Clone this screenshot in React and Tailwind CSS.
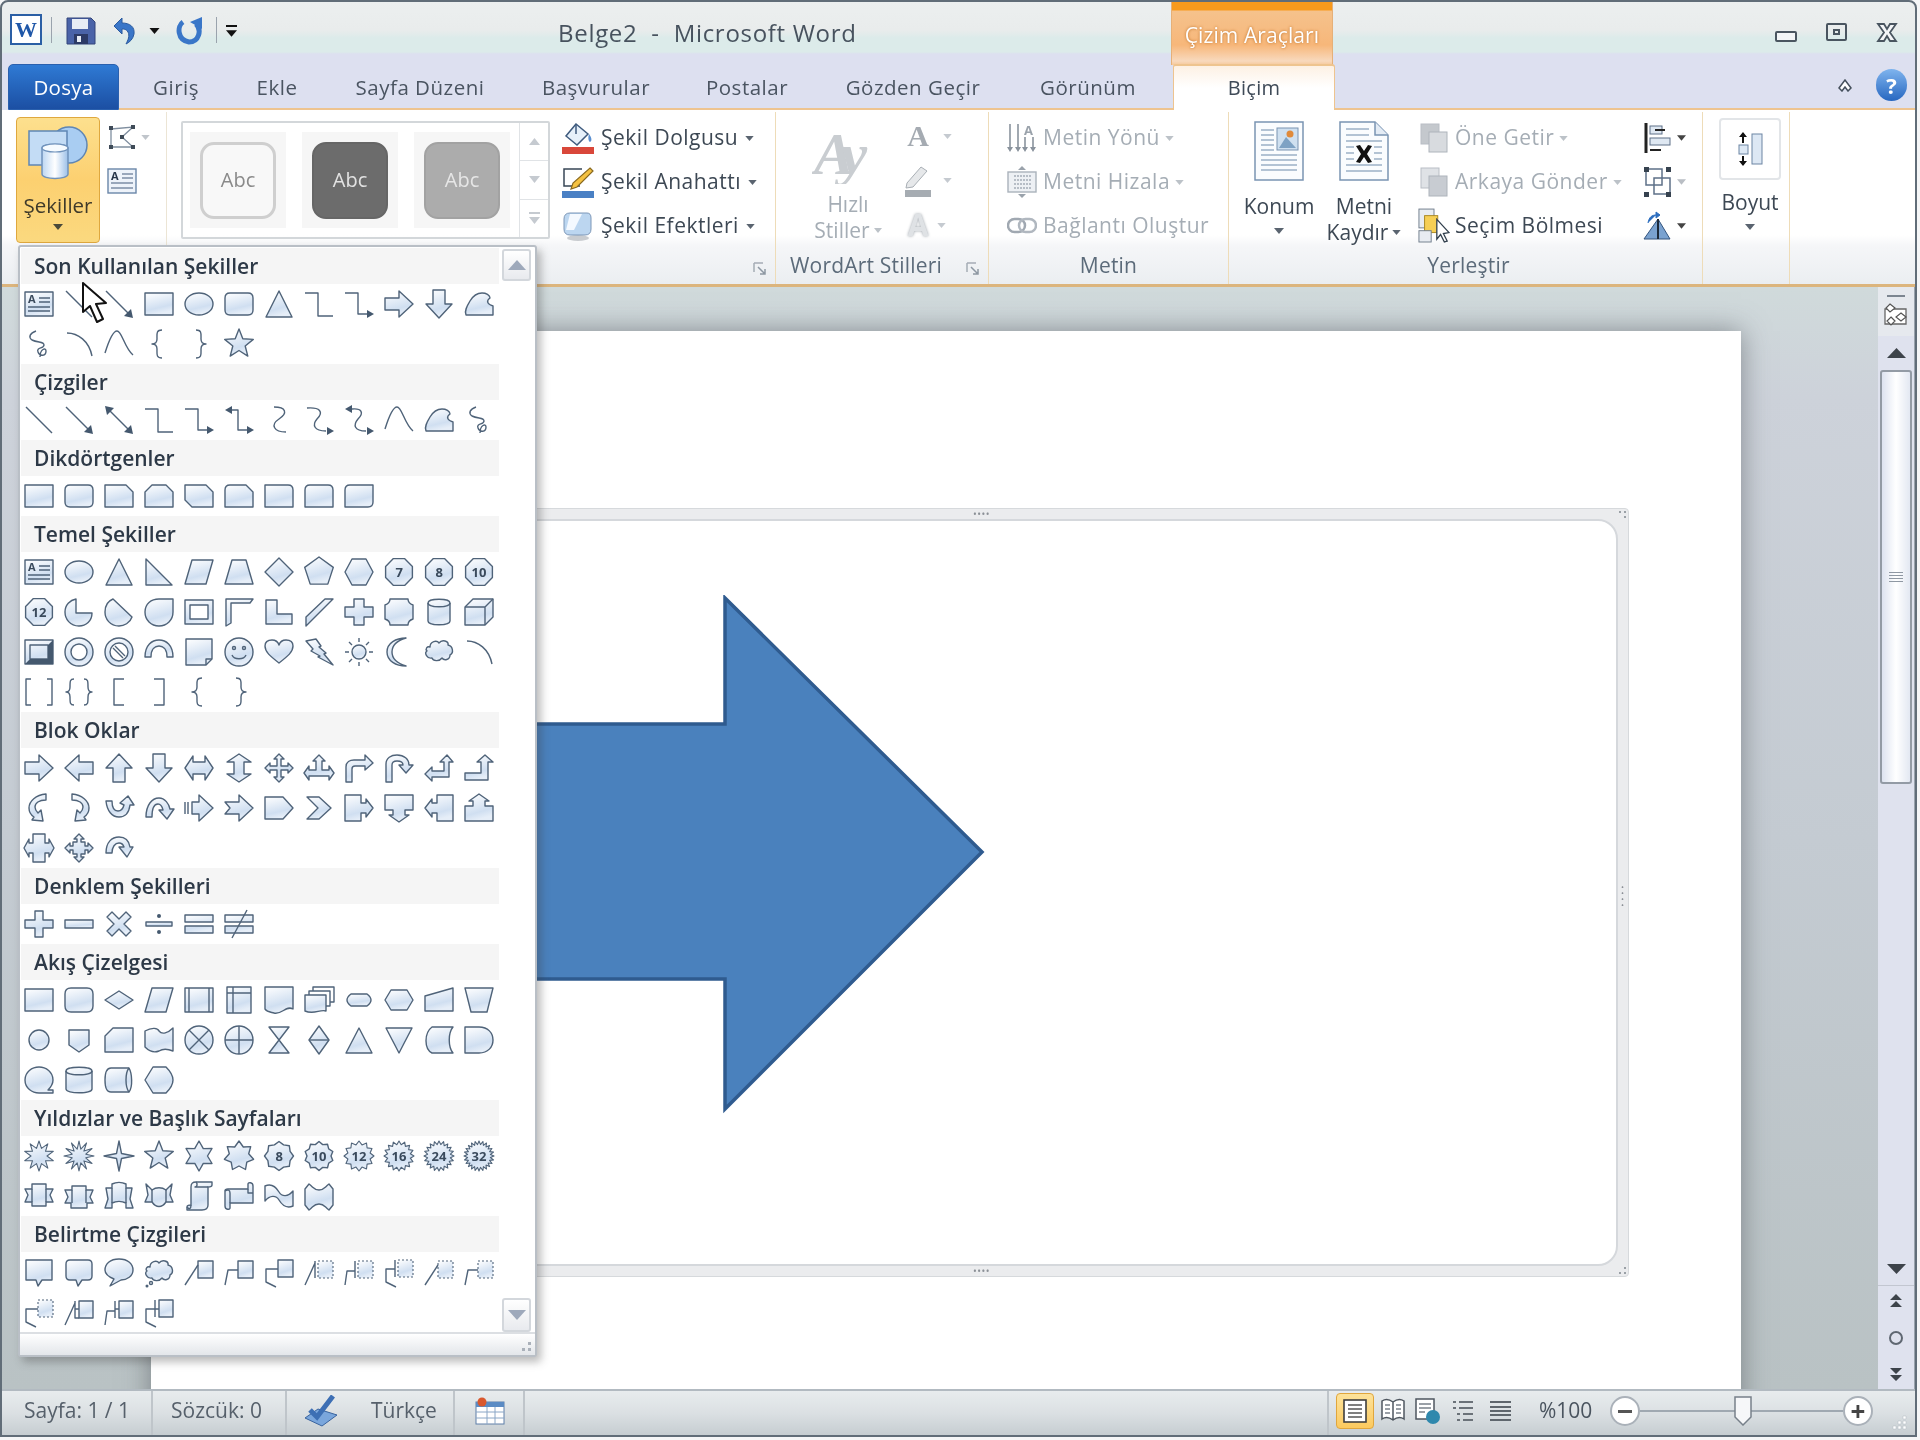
import React from 'react';

const circ = (cx, cy, r) => `M${cx - r} ${cy}a${r} ${r} 0 1 0 ${2 * r} 0a${r} ${r} 0 1 0 ${-2 * r} 0Z`;
const poly = (n, R, rot = 0, cx = 15, cy = 15) => {
    let d = '';
    for (let i = 0; i < n; i++) {
        const a = rot + (i * 2 * Math.PI) / n;
        d += `${i ? 'L' : 'M'}${(cx + R * Math.sin(a)).toFixed(1)} ${(cy - R * Math.cos(a)).toFixed(1)}`;
    }
    return d + 'Z';
};
const star = (n, R, r, cx = 15, cy = 15) => {
    let d = '';
    for (let i = 0; i < n * 2; i++) {
        const a = (i * Math.PI) / n;
        const q = i % 2 ? r : R;
        d += `${i ? 'L' : 'M'}${(cx + q * Math.sin(a)).toFixed(1)} ${(cy - q * Math.cos(a)).toFixed(1)}`;
    }
    return d + 'Z';
};

const RECT = 'M1 4H29V26H1Z';
const CLOUD = 'M6 10C6 4 13 3 15 6C18 2 25 4 24 8C29 9 30 16 26 18C26 23 20 24 18 21C15 25 9 24 8 21C3 22 0 16 3 14C1 12 3 9 6 10Z';
const FREE = 'M2 26C0 22 3 17 6 12C9 7 13 4 18 4C22 4 26 6 26 9C22 12 23 15 29 17V26Z';
const SCRIB = 'M12 2C6 4 4 8 8 11C14 14 20 12 20 16C20 20 12 18 14 23C16 28 22 27 22 22C22 18 16 20 16 28';

const S = {
    textbox: { s: 'M1 3H29V27H1Z', l: 'M15 9H26M15 13H26M4 18H26M4 22H26', t: 'A', tx: 4, ty: 14, ts: 11 },
    line: { l: 'M2 2L28 28' },
    arrow: { l: 'M2 2L26 26', k: 'M29 29L20 27L27 20Z' },
    dbl: { l: 'M5 5L25 25', k: 'M1 1L10 3L3 10ZM29 29L20 27L27 20Z' },
    elbow: { l: 'M1 4H14V27H29' },
    elbowA: { l: 'M1 4H14V25H24', k: 'M30 25L23 21V29Z' },
    elbowD: { l: 'M8 5H14V25H24', k: 'M1 5L8 1V9ZM30 25L23 21V29Z' },
    curveC: { l: 'M10 2C22 2 24 8 15 14C6 20 10 27 22 27' },
    curveA: { l: 'M3 3C16 2 20 7 13 14C8 20 10 26 22 26', k: 'M30 26L23 22V30Z' },
    curveD: { l: 'M8 4C18 3 20 8 14 14C9 20 10 26 22 26', k: 'M1 4L8 0V8ZM30 26L23 22V30Z' },
    curve: { l: 'M1 24C6 8 10 2 13 2C18 2 20 18 29 26' },
    arc: { l: 'M3 4C14 4 25 12 28 27' },
    free: { s: FREE },
    scribble: { l: SCRIB },
    lbrace: { l: 'M18 1C12 1 13 5 13 10C13 13 11 15 8 15C11 15 13 17 13 20C13 25 12 29 18 29' },
    rbrace: { l: 'M12 1C18 1 17 5 17 10C17 13 19 15 22 15C19 15 17 17 17 20C17 25 18 29 12 29' },
    rect: { s: RECT },
    oval: { s: 'M15 4C23 4 29 9 29 15S23 26 15 26S1 21 1 15S7 4 15 4Z' },
    round: { s: 'M6 4H24Q29 4 29 9V21Q29 26 24 26H6Q1 26 1 21V9Q1 4 6 4Z' },
    tri: { s: 'M15 2L28 28H2Z' },
    snip1: { s: 'M1 4H22L29 11V26H1Z' },
    snip2: { s: 'M8 4H22L29 11V26H1V11Z' },
    snipD: { s: 'M1 4H22L29 11V26H8L1 19Z' },
    snipR: { s: 'M6 4H22L29 11V26H1V9Q1 4 6 4Z' },
    round1: { s: 'M1 4H24Q29 4 29 9V26H1Z' },
    round2: { s: 'M6 4H24Q29 4 29 9V26H1V9Q1 4 6 4Z' },
    round2d: { s: 'M6 4H29V21Q29 26 24 26H1V9Q1 4 6 4Z' },
    rtTri: { s: 'M2 2L28 28H2Z' },
    para: { s: 'M8 3H29L22 27H1Z' },
    trap: { s: 'M8 3H22L29 27H1Z' },
    diamond: { s: 'M15 1L29 15L15 29L1 15Z' },
    penta: { s: poly(5, 15) },
    hexa: { s: 'M8 2H22L29 15L22 28H8L1 15Z' },
    n7: { s: poly(8, 14.5, 0.39), t: '7', tx: 11.5, ty: 20, ts: 13 },
    n8: { s: poly(8, 14.5, 0.39), t: '8', tx: 11.5, ty: 20, ts: 13 },
    n10: { s: poly(8, 14.5, 0.39), t: '10', tx: 7.5, ty: 20, ts: 13 },
    n12: { s: poly(8, 14.5, 0.39), t: '12', tx: 7.5, ty: 20, ts: 13 },
    pie: { s: 'M12 2V16H28C28 24 22 29 15 29C6 29 1 22 1 15C1 8 6 3 12 2Z' },
    chord: { s: 'M9 2L28 20C26 26 20 29 15 29C6 29 1 22 1 15C1 9 4 4 9 2Z' },
    tear: { s: 'M29 2V15C29 23 23 29 15 29C7 29 1 23 1 15C1 7 7 2 15 2Z' },
    frame: { s: 'M1 3H29V27H1ZM6 8V22H24V8Z' },
    halfFrame: { s: 'M2 29V2H29L26 6H7V26Z' },
    lShape: { s: 'M2 3H13V17H28V27H2Z' },
    stripe: { s: 'M2 29V20L21 2H29Z' },
    cross: { s: 'M10 2H20V10H29V20H20V28H10V20H1V10H10Z' },
    plaque: { s: 'M6 2H24C24 5 26 7 29 8V22C26 23 24 25 24 28H6C6 25 4 23 1 22V8C4 7 6 5 6 2Z' },
    can: { s: 'M4 6C4 1 26 1 26 6V24C26 29 4 29 4 24Z', l: 'M4 6C4 11 26 11 26 6' },
    cube: { s: 'M1 10L9 2H29V20L21 28H1Z', l: 'M1 10H21V28M21 10L29 2' },
    bevel: { s: 'M1 3H29V27H1Z', l: 'M6 8H24V22H6Z', k: 'M24 8L29 3V27L24 22ZM1 27L6 22H24L29 27Z' },
    donut: { s: `${circ(15, 15, 14)}${circ(15, 15, 8)}` },
    noSym: { s: `${circ(15, 15, 14)}${circ(15, 15, 9)}`, l: 'M9 11L19 21M11 9L21 19' },
    blockArc: { s: 'M1 20C1 8 8 3 15 3C22 3 29 8 29 20H23C23 12 19 9 15 9C11 9 7 12 7 20Z' },
    folded: { s: 'M2 2H28V22L22 28H2Z', l: 'M28 22H22V28' },
    smiley: { s: circ(15, 15, 14), l: `M8 18C10 23 20 23 22 18${circ(10, 11, 1.5)}${circ(20, 11, 1.5)}` },
    heart: { s: 'M15 26C6 19 1 15 1 9C1 5 4 3 8 3C11 3 14 5 15 8C16 5 19 3 22 3C26 3 29 5 29 9C29 15 24 19 15 26Z' },
    bolt: { s: 'M2 4L12 2L17 9L15 10L22 16L20 17L29 28L14 20L16 19L7 14L9 12Z' },
    sun: { s: circ(15, 15, 7), l: 'M15 1V5M15 25V29M1 15H5M25 15H29M5 5L8 8M22 22L25 25M25 5L22 8M8 22L5 25' },
    moon: { s: 'M22 1C12 4 8 9 8 15C8 21 12 26 22 29C12 29 3 24 3 15C3 6 12 1 22 1Z' },
    cloud: { s: CLOUD },
    dblBracket: { l: 'M7 2H2V28H7M23 2H28V28H23' },
    dblBrace: { l: 'M10 2C6 2 6 4 6 10C6 13 5 15 2 15C5 15 6 17 6 20C6 26 6 28 10 28M20 2C24 2 24 4 24 10C24 13 25 15 28 15C25 15 24 17 24 20C24 26 24 28 20 28' },
    lbracket: { l: 'M20 2H10V28H20' },
    rbracket: { l: 'M10 2H20V28H10' },
    rA: { s: 'M1 9H15V2L29 15L15 28V21H1Z' },
    lA: { s: 'M29 9H15V2L1 15L15 28V21H29Z' },
    uA: { s: 'M9 29V15H2L15 1L28 15H21V29Z' },
    dA: { s: 'M9 1V15H2L15 29L28 15H21V1Z' },
    lrA: { s: 'M1 15L9 3V9H21V3L29 15L21 27V21H9V27Z' },
    udA: { s: 'M15 1L27 9H20V21H27L15 29L3 21H10V9H3Z' },
    quadA: { s: 'M15 1L20 6H17V13H24V10L29 15L24 20V17H17V24H20L15 29L10 24H13V17H6V20L1 15L6 10V13H13V6H10Z' },
    lrUp: { s: 'M15 2L21 8H18V17H25V13L30 20L25 27V23H5V27L0 20L5 13V17H12V8H9Z' },
    bent: { s: 'M2 29V14C2 9 6 7 10 7H21V2L29 10L21 17V13H11C9 13 8 14 8 16V29Z' },
    uturn: { s: 'M2 29V11C2 5 7 2 13 2C20 2 25 6 25 12H29L22 20L15 12H19C19 9 16 8 13 8C10 8 8 9 8 12V29Z' },
    leftUp: { s: 'M1 21L8 14V18H20V9H16L23 2L29 9H25V24H8V28Z' },
    bentUp: { s: 'M1 20H17V9H13L21 2L29 9H24V27H1Z' },
    curvedR: { s: 'M22 1C12 2 5 8 5 15C5 19 7 22 10 24L8 27L19 28L17 17L14 20C12 18 11 16 11 14C11 10 15 7 22 7Z' },
    curvedL: { s: 'M8 1C18 2 25 8 25 15C25 19 23 22 20 24L22 27L11 28L13 17L16 20C18 18 19 16 19 14C19 10 15 7 8 7Z' },
    curvedU: { s: 'M2 8C3 18 8 24 15 24C21 24 25 20 26 12L30 12L24 3L16 10L20 12C19 16 17 18 14 18C10 18 8 14 8 8Z' },
    curvedD: { s: 'M2 24C2 12 8 5 15 5C21 5 25 11 26 16H30L23 26L15 17H19C18 13 17 11 14 11C10 11 8 16 8 24Z' },
    striped: { s: 'M8 9H15V2L29 15L15 28V21H8Z', l: 'M1 9V21M4 9V21' },
    notched: { s: 'M1 9H15V2L29 15L15 28V21H1L6 15Z' },
    pentA: { s: 'M1 4H19L29 15L19 26H1Z' },
    chevron: { s: 'M3 4H15L27 15L15 26H3L14 15Z' },
    rCall: { s: 'M1 2H17V10H22V6L29 15L22 24V20H17V28H1Z' },
    dCall: { s: 'M1 2H29V17H21V22H25L15 29L5 22H9V17H1Z' },
    lCall: { s: 'M29 2H13V10H8V6L1 15L8 24V20H13V28H29Z' },
    uCall: { s: 'M1 28H29V13H21V8H25L15 1L5 8H9V13H1Z' },
    lrCall: { s: 'M9 1H21V10H25V6L30 15L25 24V20H21V29H9V20H5V24L0 15L5 6V10H9Z' },
    quadCall: { s: 'M15 1L20 6H17V9H21V13H24V10L29 15L24 20V17H21V21H17V24H20L15 29L10 24H13V21H9V17H6V20L1 15L6 10V13H9V9H13V6H10Z' },
    circA: { s: 'M2 20C2 9 8 4 15 4C21 4 25 8 26 14H29L23 24L15 14H20C19 11 17 10 15 10C11 10 8 14 8 20Z' },
    plus: { s: 'M11 2H19V11H29V19H19V28H11V19H1V11H11Z' },
    minus: { s: 'M1 11H29V19H1Z' },
    mult: { s: 'M8 3L15 10L22 3L27 8L20 15L27 22L22 27L15 20L8 27L3 22L10 15L3 8Z' },
    div: { s: 'M2 13H28V17H2Z', k: `${circ(15, 7, 2)}${circ(15, 23, 2)}` },
    equal: { s: 'M1 6H29V13H1ZM1 17H29V24H1Z' },
    neq: { s: 'M1 6H29V13H1ZM1 17H29V24H1Z', l: 'M8 29L23 1' },
    alt: { s: 'M7 3H23Q29 3 29 9V21Q29 27 23 27H7Q1 27 1 21V9Q1 3 7 3Z' },
    decision: { s: 'M15 6L29 15L15 24L1 15Z' },
    predef: { s: 'M1 3H29V27H1Z', l: 'M5 3V27M25 3V27' },
    internal: { s: 'M3 2H27V28H3Z', l: 'M3 8H27M9 2V28' },
    doc: { s: 'M1 2H29V24C22 20 18 30 10 28C6 27 3 27 1 24Z' },
    multidoc: { s: 'M1 10H22V26C16 24 10 30 1 26Z', l: 'M5 10V6H26V21H22M9 6V2H30V17H26' },
    term: { s: 'M7 9H23Q31 15 23 21H7Q-1 15 7 9Z' },
    prep: { s: 'M7 5H23L29 15L23 25H7L1 15Z' },
    manualIn: { s: 'M1 11L29 3V26H1Z' },
    manualOp: { s: 'M1 3H29L23 27H7Z' },
    conn: { s: circ(15, 15, 10) },
    offpage: { s: 'M5 5H25V20L15 27L5 20Z' },
    card: { s: 'M9 3H29V27H1V11Z' },
    tape: { s: 'M1 6C8 2 14 3 15 6C18 10 24 8 29 3V26C22 23 18 24 15 26C10 28 6 27 1 22Z' },
    sum: { s: circ(15, 15, 14), l: 'M5 5L25 25M25 5L5 25' },
    or: { s: circ(15, 15, 14), l: 'M15 1V29M1 15H29' },
    collate: { s: 'M5 2H25L5 28H25Z' },
    sort: { s: 'M15 1L25 15L15 29L5 15Z', l: 'M5 15H25' },
    extract: { s: 'M15 3L28 28H2Z' },
    merge: { s: 'M2 3H28L15 28Z' },
    stored: { s: 'M8 2H29C24 8 24 22 29 28H8C0 24 0 8 8 2Z' },
    delay: { s: 'M1 2H15C24 2 29 8 29 15C29 22 24 28 15 28H1Z' },
    seq: { s: 'M15 2C8 2 1 7 1 15C1 23 8 28 15 28H29V25H24C27 22 29 19 29 15C29 7 22 2 15 2Z' },
    mag: { s: 'M2 6C2 1 28 1 28 6V24C28 29 2 29 2 24Z', l: 'M2 6C2 11 28 11 28 6' },
    direct: { s: 'M7 3H25C28 8 29 22 25 27H7C2 27 1 22 1 15C1 8 2 3 7 3Z', l: 'M25 3C21 8 21 22 25 27' },
    display: { s: 'M9 2H22C26 6 29 10 29 15C29 20 26 24 22 28H9L1 15Z' },
    expl1: { s: star(10, 15, 8), w: 1.1 },
    expl2: { s: star(12, 15, 7), w: 1.1 },
    star4: { s: star(4, 15, 3.5) },
    star5: { s: star(5, 15, 6.5) },
    star6: { s: star(6, 15, 8.5) },
    star7: { s: star(7, 15, 10) },
    s8: { s: star(8, 14.5, 12), t: '8', tx: 11.5, ty: 20, ts: 13 },
    s10: { s: star(10, 14.5, 12), t: '10', tx: 7.5, ty: 20, ts: 13 },
    s12: { s: star(12, 15, 11.5), t: '12', tx: 7.5, ty: 20, ts: 13, w: 1.1 },
    s16: { s: star(16, 15, 11.5), t: '16', tx: 7.5, ty: 20, ts: 13, w: 1.1 },
    s24: { s: star(20, 15, 11.5), t: '24', tx: 7.5, ty: 20, ts: 13, w: 1.1 },
    s32: { s: star(24, 15, 11.5), t: '32', tx: 7.5, ty: 20, ts: 13, w: 1.1 },
    ribbonUp: { s: 'M8 3H22V8H29L26 14L29 21H22V25H8V21H1L4 14L1 8H8Z', l: 'M8 8V21M22 8V21' },
    ribbonDown: { s: 'M8 5H22V9H29L26 16L29 22H23V27H7V22H1L4 16L1 9H8Z', l: 'M8 9V22M22 9V22' },
    curveRibU: { s: 'M8 3C12 1 18 1 22 3V7H28L26 18L29 27H22V22C18 20 12 20 8 22V27H1L4 18L2 7H8Z', l: 'M8 7V22M22 7V22' },
    curveRibD: { s: 'M2 3L8 9C12 6 18 6 22 9L28 3L26 14L29 21H22C18 27 12 27 8 21H1L4 14Z', l: 'M8 9V21M22 9V21' },
    vscroll: { s: 'M7 6C7 2 9 1 12 1H28V4C28 6 26 6 24 6V24C24 28 21 29 18 29H3V26C3 24 5 24 7 24Z', l: 'M12 1C14 3 13 6 11 6H24M3 26C5 29 7 28 7 24' },
    hscroll: { s: 'M4 8H24V3C24 1 29 1 29 5V22H6V27C6 29 1 29 1 25V10C1 8 2 8 4 8Z', l: 'M24 8V12H29M6 22V12C6 9 4 8 1 10' },
    wave: { s: 'M1 5C8 2 12 6 15 11C18 16 24 16 29 10V25C22 28 18 24 15 19C12 14 6 14 1 20Z' },
    dblWave: { s: 'M1 8L5 3C10 7 10 9 15 9C20 9 20 7 25 3L29 8V24L25 29C20 25 20 23 15 23C10 23 10 25 5 29L1 24Z' },
    rectC: { s: 'M2 3H28V23H18L14 29L12 23H2Z' },
    roundC: { s: 'M6 3H24Q28 3 28 7V19Q28 23 24 23H18L14 29L12 23H6Q2 23 2 19V7Q2 3 6 3Z' },
    ovalC: { s: 'M15 2C24 2 29 7 29 13C29 19 23 23 17 23L6 29L10 22C5 20 1 17 1 13C1 7 6 2 15 2Z' },
    cloudC: { s: CLOUD, l: `${circ(7, 26, 1.5)}${circ(3, 29, 0.8)}` },
    line1: { s: 'M14 4H29V21H14Z', l: 'M1 28L14 8' },
    line2: { s: 'M14 4H29V21H14Z', l: 'M1 28L4 13H14' },
    line3: { s: 'M14 3H29V20H14Z', l: 'M14 12H2V25L12 30' },
    acc1: { s: 'M14 4H29V21H14Z', dash: true, l: 'M1 28L11 6M11 4V21' },
    acc2: { s: 'M14 4H29V21H14Z', dash: true, l: 'M1 28L3 14H11M11 4V21' },
    acc3: { s: 'M14 3H29V20H14Z', dash: true, l: 'M11 12H2V25L12 30M11 3V20' },
    none1: { s: 'M14 4H29V21H14Z', dash: true, l: 'M1 28L14 8' },
    none2: { s: 'M14 4H29V21H14Z', dash: true, l: 'M1 28L4 13H14' },
    none3: { s: 'M14 3H29V20H14Z', dash: true, l: 'M14 12H2V25L12 30' },
    border1: { s: 'M15 4H29V21H15Z', l: 'M1 28L11 6M11 4V21H15M11 12H15' },
    border2: { s: 'M15 4H29V21H15Z', l: 'M1 28L3 14H11M11 4V21M11 12H15' },
    border3: { s: 'M15 3H29V20H15Z', l: 'M11 12H2V25L12 30M11 3V20M11 12H15' },
};

const SECTIONS = [
    { title: 'Son Kullanılan Şekiller', items: ['textbox', 'line', 'arrow', 'rect', 'oval', 'round', 'tri', 'elbow', 'elbowA', 'rA', 'dA', 'free', 'scribble', 'arc', 'curve', 'lbrace', 'rbrace', 'star5'] },
    { title: 'Çizgiler', items: ['line', 'arrow', 'dbl', 'elbow', 'elbowA', 'elbowD', 'curveC', 'curveA', 'curveD', 'curve', 'free', 'scribble'] },
    { title: 'Dikdörtgenler', items: ['rect', 'round', 'snip1', 'snip2', 'snipD', 'snipR', 'round1', 'round2', 'round2d'] },
    { title: 'Temel Şekiller', items: ['textbox', 'oval', 'tri', 'rtTri', 'para', 'trap', 'diamond', 'penta', 'hexa', 'n7', 'n8', 'n10', 'n12', 'pie', 'chord', 'tear', 'frame', 'halfFrame', 'lShape', 'stripe', 'cross', 'plaque', 'can', 'cube', 'bevel', 'donut', 'noSym', 'blockArc', 'folded', 'smiley', 'heart', 'bolt', 'sun', 'moon', 'cloud', 'arc', 'dblBracket', 'dblBrace', 'lbracket', 'rbracket', 'lbrace', 'rbrace'] },
    { title: 'Blok Oklar', items: ['rA', 'lA', 'uA', 'dA', 'lrA', 'udA', 'quadA', 'lrUp', 'bent', 'uturn', 'leftUp', 'bentUp', 'curvedR', 'curvedL', 'curvedU', 'curvedD', 'striped', 'notched', 'pentA', 'chevron', 'rCall', 'dCall', 'lCall', 'uCall', 'lrCall', 'quadCall', 'circA'] },
    { title: 'Denklem Şekilleri', items: ['plus', 'minus', 'mult', 'div', 'equal', 'neq'] },
    { title: 'Akış Çizelgesi', items: ['rect', 'alt', 'decision', 'para', 'predef', 'internal', 'doc', 'multidoc', 'term', 'prep', 'manualIn', 'manualOp', 'conn', 'offpage', 'card', 'tape', 'sum', 'or', 'collate', 'sort', 'extract', 'merge', 'stored', 'delay', 'seq', 'mag', 'direct', 'display'] },
    { title: 'Yıldızlar ve Başlık Sayfaları', items: ['expl1', 'expl2', 'star4', 'star5', 'star6', 'star7', 's8', 's10', 's12', 's16', 's24', 's32', 'ribbonUp', 'ribbonDown', 'curveRibU', 'curveRibD', 'vscroll', 'hscroll', 'wave', 'dblWave'] },
    { title: 'Belirtme Çizgileri', items: ['rectC', 'roundC', 'ovalC', 'cloudC', 'line1', 'line2', 'line3', 'acc1', 'acc2', 'acc3', 'none1', 'none2', 'none3', 'border1', 'border2', 'border3'] },
];

const TABS = [
    { label: 'Giriş', cls: 'w-[114px]' },
    { label: 'Ekle', cls: 'w-[88px]' },
    { label: 'Sayfa Düzeni', cls: 'w-[198px]' },
    { label: 'Başvurular', cls: 'w-[154px]' },
    { label: 'Postalar', cls: 'w-[148px]' },
    { label: 'Gözden Geçir', cls: 'w-[184px]' },
    { label: 'Görünüm', cls: 'w-[166px]' },
];

const Shape = ({ name }) => {
    const s = S[name];
    const w = s.w || 1.4;
    return (
        <svg width="30" height="30" viewBox="0 0 30 30" className="overflow-visible">
            <g stroke="#4f6379" strokeWidth="1.4" strokeLinejoin="round" fill="none">
                {s.s && <path d={s.s} fill="url(#shapeFill)" fillRule="evenodd" strokeDasharray={s.dash ? '2 2' : undefined} strokeWidth={s.dash ? 1.1 : w} />}
                {s.l && <path d={s.l} />}
                {s.k && <path d={s.k} fill="#44586e" stroke="none" />}
            </g>
            {s.t && <text x={s.tx} y={s.ty} fontSize={s.ts} fontWeight="700" fill="#3a4a5c">{s.t}</text>}
        </svg>
    );
};

const Caret = ({ color = '#5a6470', w = 10, h = 6 }) => (
    <svg width={w} height={h} viewBox="0 0 10 6" className="shrink-0"><path d="M0 0H10L5 6Z" fill={color} /></svg>
);

const Launcher = () => (
    <svg width="14" height="14" viewBox="0 0 14 14" className="absolute right-[8px] bottom-[8px]">
        <path d="M1 1H10M1 1V10" stroke="#a5acb5" fill="none" strokeWidth="1.5" />
        <path d="M5 5L12 12M12 7V12H7" stroke="#8e98a3" fill="none" strokeWidth="1.5" />
    </svg>
);

const GroupLabel = ({ children }) => (
    <div className="h-[36px] flex items-center justify-center text-[21px] text-[#5c6b7a] tracking-[0.2px] whitespace-nowrap">{children}</div>
);

const Cmd = ({ icon, label, muted, caret = true, gap = 'gap-[7px]' }) => (
    <div className={`h-[44.5px] flex items-center ${gap}`}>
        <div className="w-[32px] h-[32px] flex items-center justify-center shrink-0">{icon}</div>
        <span className={`text-[21px] tracking-[0.5px] whitespace-nowrap ${muted ? 'text-[#a5adb5]' : 'text-[#3d4854]'}`}>{label}</span>
        {caret && <Caret color={muted ? '#bcc2c8' : '#5a6470'} w={9} h={5} />}
    </div>
);

const Swatch = ({ outer, box, text }) => (
    <div className={`w-[96px] h-[96px] flex items-center justify-center ${outer}`}>
        <div className={`w-[76px] h-[77px] rounded-[14px] flex items-center justify-center text-[20px] ${box} ${text}`}>Abc</div>
    </div>
);

// ribbon drawings
const ShapesIcon = () => (
    <svg width="60" height="58" viewBox="0 0 60 58">
        <defs>
            <linearGradient id="cyl" x1="0" y1="0" x2="1" y2="0">
                <stop offset="0" stopColor="#bcd6f2" /><stop offset="0.5" stopColor="#ffffff" /><stop offset="1" stopColor="#9cc0e8" />
            </linearGradient>
        </defs>
        <circle cx="41" cy="21" r="18" fill="#a9cdf2" stroke="#5f86b4" strokeWidth="1.5" />
        <rect x="1" y="7" width="38" height="34" fill="#c3dcf5" stroke="#5f86b4" strokeWidth="1.5" />
        <path d="M14 24C14 19 40 19 40 24V50C40 56 14 56 14 50Z" fill="url(#cyl)" stroke="#6f92bb" strokeWidth="1.5" />
        <ellipse cx="27" cy="24" rx="13" ry="4" fill="#f6fbff" stroke="#6f92bb" strokeWidth="1.2" />
    </svg>
);

const EditPoints = () => (
    <svg width="30" height="28" viewBox="0 0 30 28">
        <path d="M4 6L26 4L15 14L26 24L4 24Z" fill="none" stroke="#7f8e9f" strokeWidth="1.3" />
        {[[2, 3], [24, 2], [13, 12], [24, 22], [2, 22]].map(([x, y]) => (
            <rect key={x + '-' + y} x={x} y={y} width="4" height="4" fill="#3f4b58" />
        ))}
    </svg>
);

const TextBoxIcon = () => (
    <svg width="30" height="26" viewBox="0 0 30 26">
        <rect x="1" y="1" width="28" height="24" fill="#eef3fa" stroke="#6a86a8" strokeWidth="1.4" />
        <path d="M15 6H26M15 10H26M4 15H26M4 20H26" stroke="#7d8fa6" strokeWidth="1.5" />
        <text x="4" y="12" fontSize="11" fontWeight="700" fill="#27364a">A</text>
    </svg>
);

const Bucket = () => (
    <svg width="32" height="32" viewBox="0 0 32 32">
        <path d="M14 2L4 14L15 23L26 12Z" fill="#e6f0fa" stroke="#3f5b7e" strokeWidth="1.5" />
        <path d="M14 2V12" stroke="#3f5b7e" strokeWidth="1.5" />
        <path d="M27 12C30 16 30 19 28 20C26 19 26 15 27 12Z" fill="#5a8fd0" />
        <rect x="0" y="25" width="32" height="7" fill="#d9473a" />
    </svg>
);

const Pen = () => (
    <svg width="32" height="32" viewBox="0 0 32 32">
        <path d="M20 3H2V20H18" fill="#fff" stroke="#374656" strokeWidth="1.5" />
        <path d="M28 2L31 5L15 21L9 23L11 17Z" fill="#f5c242" stroke="#8a6a20" strokeWidth="1.2" />
        <rect x="0" y="25" width="32" height="7" fill="#4a80c4" />
    </svg>
);

const Effects = () => (
    <svg width="32" height="32" viewBox="0 0 32 32">
        <ellipse cx="16" cy="28" rx="11" ry="3" fill="#c9ccd0" />
        <path d="M8 3H25Q29 3 29 8V19Q29 25 23 25H8Q2 25 2 19V9Q2 3 8 3Z" fill="#bcd6f0" stroke="#7d97b8" strokeWidth="1" />
        <path d="M8 4H20L12 20H4Z" fill="#f4f9ff" />
    </svg>
);

const Doc = ({ children }) => (
    <svg width="50" height="60" viewBox="0 0 50 60">
        <path d="M1 1H49V59H1Z" fill="#fafcfe" stroke="#7a94b2" strokeWidth="1.5" />
        {children}
    </svg>
);

const MetinYonu = () => (
    <svg width="30" height="30" viewBox="0 0 30 30">
        <path d="M3 1V25M11 1V25M18 14V25M26 14V25" stroke="#8a939d" strokeWidth="1.6" />
        <path d="M0 24L3 29L6 24ZM8 24L11 29L14 24ZM15 24L18 29L21 24ZM23 24L26 29L29 24Z" fill="#8a939d" />
        <text x="17" y="12" fontSize="13" fontWeight="700" fill="#9aa2ab">A</text>
    </svg>
);

const MetinHizala = () => (
    <svg width="30" height="32" viewBox="0 0 30 32">
        <rect x="1" y="6" width="28" height="20" fill="#edf0f4" stroke="#aab2bb" strokeWidth="1.4" />
        <path d="M7 10H24M7 14H24M7 18H24M7 22H24" stroke="#a4acb6" strokeWidth="1.4" strokeDasharray="2 1" />
        <path d="M15 0L19 4H11ZM15 32L19 28H11Z" fill="#9aa2ab" />
    </svg>
);

const LinkIcon = () => (
    <svg width="30" height="18" viewBox="0 0 30 18">
        <rect x="1" y="2" width="17" height="13" rx="6.5" fill="none" stroke="#a0a8b1" strokeWidth="2.5" />
        <rect x="12" y="2" width="17" height="13" rx="6.5" fill="none" stroke="#b0b7bf" strokeWidth="2.5" />
    </svg>
);

const TwoSheets = ({ front = '#c8ccd2', back = '#dfe2e6' }) => (
    <svg width="30" height="32" viewBox="0 0 30 32">
        <rect x="2" y="2" width="18" height="20" fill={back} stroke="#b9bec5" />
        <rect x="10" y="10" width="18" height="20" fill={front} stroke="#aeb4bb" />
    </svg>
);

const SelectionPane = () => (
    <svg width="34" height="38" viewBox="0 0 34 38">
        <rect x="1" y="1" width="16" height="20" fill="#e8ecf1" stroke="#6f7c8b" />
        <rect x="7" y="8" width="14" height="18" fill="#f6cf55" stroke="#a8861f" />
        <rect x="1" y="24" width="13" height="12" fill="#e8ecf1" stroke="#6f7c8b" />
        <path d="M20 12V33L24 28L28 36L31 35L27 27L33 26Z" fill="#fff" stroke="#33414f" strokeWidth="1.4" />
    </svg>
);

const Cursor = () => (
    <svg width="26" height="42" viewBox="0 0 26 42" className="absolute left-[82px] top-[282px] z-30">
        <path d="M1 1V30L8 24L15 40L21 37L14 22L24 21Z" fill="#fff" stroke="#111" strokeWidth="2" strokeLinejoin="round" />
    </svg>
);

const ShapesMenu = () => (
    <div className="absolute left-[18px] top-[245px] w-[519px] h-[1112px] z-20 bg-white border-2 border-[#b9bfc6] rounded-[3px] shadow-[4px_5px_8px_rgba(60,60,60,0.35)] flex flex-col">
        <div className="flex flex-1 min-h-0">
            <div className="w-[479px] pl-px pt-px">
                {SECTIONS.map(sec => (
                    <div key={sec.title}>
                        <div className="h-[36px] bg-[#f5f5f5] flex items-center pl-[13px] pt-[2px] text-[21px] font-semibold text-[#2d3947]">{sec.title}</div>
                        <div className="grid grid-cols-[repeat(12,30px)] gap-x-[10px] auto-rows-[40px] items-center pl-[3px]">
                            {sec.items.map((it, i) => <Shape key={it + i} name={it} />)}
                        </div>
                    </div>
                ))}
            </div>
            <div className="flex-1 flex flex-col justify-between pl-[3px] pr-[3px] pt-[2px]">
                <div className="h-[32px] w-[29px] border-2 border-[#d3d7dc] rounded-[3px] bg-gradient-to-b from-white to-[#e8eaee] flex items-center justify-center">
                    <svg width="18" height="10" viewBox="0 0 18 10"><path d="M9 0L18 10H0Z" fill="#9ea9bb" /></svg>
                </div>
                <div className="h-[34px] w-[29px] border-2 border-[#d3d7dc] rounded-[3px] bg-gradient-to-b from-white to-[#e8eaee] flex items-center justify-center">
                    <svg width="18" height="10" viewBox="0 0 18 10"><path d="M9 10L18 0H0Z" fill="#9ea9bb" /></svg>
                </div>
            </div>
        </div>
        <div className="relative h-[23px] border-t-2 border-[#dcdfe3] bg-gradient-to-b from-white to-[#e3e6ea]">
            <svg width="14" height="14" viewBox="0 0 14 14" className="absolute right-[2px] bottom-[1px]">
                <path d="M9 2h3v3H9zM3 8h3v3H3zM9 8h3v3H9z" fill="#aab1ba" />
            </svg>
        </div>
    </div>
);

const TitleBar = () => (
    <div className="h-[62px] flex shrink-0">
        <div className="w-[1169px] flex items-start pt-[12px] pl-[8px]">
            <div className="w-[32px] h-[31px] border-2 border-[#2b5fa5] bg-white flex items-center justify-center text-[22px] font-bold text-[#1f57a8] leading-none font-['Liberation_Serif',serif]">W</div>
            <div className="w-px h-[26px] bg-[#9aa3ad] ml-[9px] mt-[3px]" />
            <svg width="30" height="28" viewBox="0 0 30 28" className="ml-[14px] mt-[3px]">
                <path d="M1 1H25L29 5V27H1Z" fill="#4a63a8" stroke="#33457a" />
                <rect x="6" y="2" width="16" height="10" fill="#e8edf5" />
                <rect x="8" y="17" width="14" height="10" fill="#2c3a66" />
                <rect x="11" y="19" width="4" height="6" fill="#e8edf5" />
            </svg>
            <svg width="24" height="30" viewBox="0 0 24 30" className="ml-[16px] mt-[2px]">
                <path d="M2 10L10 2V7C18 7 23 11 22 18C21 23 18 26 14 28C16 24 18 20 16 16C14 13 12 13 10 13V18Z" fill="#3a76c8" stroke="#2b5a9e" strokeWidth="1" />
            </svg>
            <div className="ml-[13px] mt-[14px]"><Caret color="#111" w={11} h={6} /></div>
            <svg width="28" height="30" viewBox="0 0 28 30" className="ml-[15px] mt-[2px]">
                <path d="M8 6C2 10 2 24 14 26C24 26 27 14 21 8" fill="none" stroke="#3a76c8" strokeWidth="5" />
                <path d="M27 1V13L15 6Z" fill="#3a76c8" />
            </svg>
            <div className="w-px h-[26px] bg-[#9aa3ad] ml-[13px] mt-[3px]" />
            <div className="ml-[9px] mt-[11px] flex flex-col items-center gap-[3px]">
                <div className="w-[11px] h-[2px] bg-[#111]" />
                <Caret color="#111" w={11} h={7} />
            </div>
            <div className="ml-[321px] text-[24px] leading-[40px] -mt-[1px] text-[#47525e] tracking-[0.7px] whitespace-pre">Belge2  -  Microsoft Word</div>
        </div>
        <div className="w-[162px] h-[64px] -mt-px bg-[linear-gradient(to_bottom,#f89a1c_0,#f89a1c_9px,#f5c28c_10px,#f7b77a_44px,#f8d9bd_60px,#f6c89a_64px)] border-x border-[#e6b078] flex items-center justify-center pt-[5px]">
            <span className="text-[21px] text-white tracking-[0.1px] whitespace-nowrap [text-shadow:0_0_3px_#b86a20]">Çizim Araçları</span>
        </div>
        <div className="flex-1 flex items-start justify-end gap-[29px] pr-[17px] pt-[21px] text-[#444]">
            <div className="w-[22px] h-[11px] mt-[8px] border-2 border-[#4a5560] rounded-[2px] bg-[#f2f4f6]" />
            <div className="w-[21px] h-[18px] border-2 border-[#4a5560] rounded-[2px] flex items-center justify-center"><div className="w-[7px] h-[6px] border-2 border-[#4a5560]" /></div>
            <svg width="22" height="19" viewBox="0 0 22 19"><path d="M2 1H8L11 6L14 1H20L14 9.5L20 18H14L11 13L8 18H2L8 9.5Z" fill="#f4f5f7" stroke="#4a5560" strokeWidth="1.8" /></svg>
        </div>
    </div>
);

const TabRow = () => (
    <div className="h-[46px] flex shrink-0 relative z-10">
        <div className="w-[6px]" />
        <div className="w-[111px] h-[46px] rounded-t-[5px] bg-gradient-to-b from-[#2f7ad4] to-[#1c4fa3] border border-[#2a60ae] flex items-center justify-center text-[20.5px] text-white tracking-[0.3px]">Dosya</div>
        <div className="flex border-b-2 border-[#eec48f] h-[46px]">
            {TABS.map(t => (
                <div key={t.label} className={`${t.cls} flex items-center justify-center pt-[2px] text-[20.5px] text-[#4a5461] tracking-[0.5px] whitespace-nowrap`}>{t.label}</div>
            ))}
        </div>
        <div className="w-[2px] border-b-2 border-[#eec48f]" />
        <div className="w-[162px] h-[46px] rounded-t-[3px] border-x border-t-2 border-[#eec48f] bg-gradient-to-b from-[#fdf1e4] via-white to-white flex items-center justify-center text-[20px] text-[#3f4a57] tracking-[0.3px]">Biçim</div>
        <div className="flex-1 flex items-center justify-end gap-[24px] pr-[8px] border-b-2 border-[#eec48f] pb-[2px]">
            <svg width="14" height="14" viewBox="0 0 14 14"><path d="M1 10L7 2L13 10L10 13L7 9L4 13Z" fill="#fff" stroke="#45505c" strokeWidth="1.5" /></svg>
            <div className="w-[31px] h-[32px] rounded-full bg-gradient-to-b from-[#7fb4ee] to-[#2667c0] text-white text-[22px] font-bold flex items-center justify-center">?</div>
        </div>
    </div>
);

const Ribbon = () => (
    <div className="h-[177px] shrink-0 flex pt-[2px] border-b-[3px] border-b-[#dcb57d] bg-[linear-gradient(to_bottom,#fff_0,#fff_72%,#f5f6f8_78%,#ebeef1_100%)]">
        {/* Insert shapes */}
        <div className="w-[165px] flex flex-col border-r border-[#ece5d5]">
            <div className="h-[136px] flex pl-[14px] pt-[5px]">
                <div className="w-[84px] h-[126px] rounded-[4px] border border-[#dfa83e] bg-gradient-to-b from-[#fde08e] via-[#fcd070] to-[#fbd97f] flex flex-col items-center pt-[6px]">
                    <ShapesIcon />
                    <span className="text-[20.5px] mt-[10px] leading-[26px] text-[#3f3a2a]">Şekiller</span>
                    <div className="mt-[6px]"><Caret color="#4a4a3a" /></div>
                </div>
                <div className="flex flex-col pl-[7px] pt-[6px] gap-[17px]">
                    <div className="flex items-center gap-[4px]"><EditPoints /><Caret color="#c0c5cb" w={9} h={5} /></div>
                    <TextBoxIcon />
                </div>
            </div>
        </div>
        {/* Shape styles */}
        <div className="relative w-[609px] flex flex-col border-r border-[#eedcb8]">
            <div className="h-[136px] flex pl-[14px]">
                <div className="w-[369px] h-[118px] mt-[9px] border-2 border-[#d3d7da] rounded-[2px] flex">
                    <div className="flex-1 flex items-center pl-[7px] gap-[16px]">
                        <Swatch outer="bg-[#f6f6f6]" box="bg-[#f8f8f8] border-[3px] border-[#cfcfcf]" text="text-[#8a8a8a]" />
                        <Swatch outer="bg-[#f6f6f6]" box="bg-[#6c6c6c] border-[2px] border-[#666]" text="text-[#e2e2e2]" />
                        <Swatch outer="bg-[#f6f6f6]" box="bg-[#acacac] border-[2px] border-[#a2a2a2]" text="text-[#e6e6e6]" />
                    </div>
                    <div className="w-[29px] flex flex-col border-l border-[#e0e3e6]">
                        <div className="flex-1 flex items-center justify-center border-b border-[#e0e3e6]"><svg width="11" height="7"><path d="M5.5 0L11 7H0Z" fill="#c5cad0" /></svg></div>
                        <div className="flex-1 flex items-center justify-center border-b border-[#e0e3e6]"><svg width="11" height="7"><path d="M5.5 7L11 0H0Z" fill="#c5cad0" /></svg></div>
                        <div className="flex-1 flex flex-col gap-[3px] items-center justify-center"><div className="w-[11px] h-[2px] bg-[#c5cad0]" /><svg width="11" height="7"><path d="M5.5 7L11 0H0Z" fill="#c5cad0" /></svg></div>
                    </div>
                </div>
                <div className="flex flex-col pl-[12px] pt-[4px]">
                    <Cmd icon={<Bucket />} label="Şekil Dolgusu" />
                    <Cmd icon={<Pen />} label="Şekil Anahattı" />
                    <Cmd icon={<Effects />} label="Şekil Efektleri" />
                </div>
            </div>
            <Launcher />
        </div>
        {/* WordArt */}
        <div className="relative w-[213px] flex flex-col border-r border-[#eedcb8]">
            <div className="h-[136px] flex pl-[22px]">
                <div className="w-[100px] flex flex-col items-center text-[#a5adb5]">
                    <svg width="72" height="66" viewBox="0 0 72 66" className="mt-[6px]">
                        <text x="2" y="56" fontSize="60" fontWeight="700" fontStyle="italic" letterSpacing="-9" fontFamily="'Liberation Serif',serif" fill="#c9cdd1">Ay</text>
                    </svg>
                    <span className="text-[21px] leading-[26px] mt-[7px]">Hızlı</span>
                    <span className="text-[21px] leading-[26px] flex items-center gap-[4px]">Stiller <Caret color="#bcc2c8" w={8} h={5} /></span>
                </div>
                <div className="flex flex-col pl-[7px] pt-[2px]">
                    <div className="h-[44.5px] flex items-center gap-[12px]"><span className="text-[30px] leading-none font-bold text-[#a5abb2] w-[26px] text-center font-['Liberation_Serif',serif]">A</span><Caret color="#c5cad0" w={9} h={5} /></div>
                    <div className="h-[44.5px] flex items-center gap-[12px]">
                        <svg width="26" height="32" viewBox="0 0 26 32"><path d="M2 18L16 2L22 6L8 22L1 23Z" fill="#e6e8ea" stroke="#a9afb5" /><rect x="0" y="25" width="26" height="7" fill="#a6acb2" /></svg>
                        <Caret color="#c5cad0" w={9} h={5} />
                    </div>
                    <div className="h-[44.5px] flex items-center gap-[6px]"><span className="text-[30px] leading-none font-bold text-[#dfe2e5] w-[26px] text-center [text-shadow:0_0_3px_#9aa1a8]">A</span><Caret color="#c5cad0" w={9} h={5} /></div>
                </div>
            </div>
            <GroupLabel><span className="-translate-x-[16px]">WordArt Stilleri</span></GroupLabel>
            <Launcher />
        </div>
        {/* Text */}
        <div className="w-[240px] flex flex-col border-r border-[#eedcb8]">
            <div className="h-[136px] flex flex-col pl-[17px] pt-[4px]">
                <Cmd icon={<MetinYonu />} label="Metin Yönü" muted gap="gap-[5px]" />
                <Cmd icon={<MetinHizala />} label="Metni Hizala" muted gap="gap-[5px]" />
                <Cmd icon={<LinkIcon />} label="Bağlantı Oluştur" muted caret={false} gap="gap-[5px]" />
            </div>
            <GroupLabel>Metin</GroupLabel>
        </div>
        {/* Arrange */}
        <div className="w-[474px] flex flex-col border-r border-[#eedcb8]">
            <div className="h-[136px] flex pl-[10px]">
                <div className="w-[80px] flex flex-col items-center pt-[9px]">
                    <Doc>
                        <path d="M7 9H20M7 14H20M7 19H20M7 24H20M7 29H20M7 34H43M7 39H43M7 44H43M7 49H43" stroke="#9cb0c6" strokeWidth="1.5" />
                        <rect x="23" y="7" width="21" height="22" fill="#cfe0f0" stroke="#7a94b2" />
                        <path d="M25 27L32 16L42 27Z" fill="#7ea2c4" />
                        <circle cx="36" cy="13" r="3.5" fill="#e08a3a" />
                    </Doc>
                    <span className="text-[21px] leading-[26px] mt-[12px] text-[#3d4854]">Konum</span>
                    <div className="mt-[9px]"><Caret /></div>
                </div>
                <div className="w-[80px] ml-[5px] flex flex-col items-center pt-[9px]">
                    <svg width="50" height="60" viewBox="0 0 50 60">
                        <path d="M1 1H36L49 14V59H1Z" fill="#fafcfe" stroke="#7a94b2" strokeWidth="1.5" />
                        <path d="M36 1V14H49" fill="#e4ecf5" stroke="#7a94b2" strokeWidth="1.5" />
                        <path d="M7 8H30M7 14H30M7 20H43M7 26H15M35 26H43M7 32H15M35 32H43M7 38H15M35 38H43M7 44H43M7 50H43" stroke="#9cb0c6" strokeWidth="1.5" />
                        <path d="M17 25L21 24L25 30L29 24L33 25L28 33L33 41L29 42L25 36L21 42L17 41L22 33Z" fill="#111" />
                    </svg>
                    <span className="text-[21px] leading-[26px] mt-[12px] text-[#3d4854]">Metni</span>
                    <span className="text-[21px] leading-[26px] flex items-center gap-[4px] text-[#3d4854]">Kaydır <Caret w={9} h={5} /></span>
                </div>
                <div className="w-[224px] ml-[14px] flex flex-col pt-[4px]">
                    <Cmd icon={<TwoSheets front="#d8dbdf" back="#c4c8cd" />} label="Öne Getir" muted gap="gap-[5px]" />
                    <Cmd icon={<TwoSheets />} label="Arkaya Gönder" muted gap="gap-[5px]" />
                    <Cmd icon={<SelectionPane />} label="Seçim Bölmesi" caret={false} gap="gap-[5px]" />
                </div>
                <div className="flex flex-col pt-[4px] pl-[1px]">
                    <div className="h-[44.5px] flex items-center gap-[4px]">
                        <svg width="30" height="32" viewBox="0 0 30 32"><path d="M3 1V31" stroke="#222" strokeWidth="3" /><rect x="7" y="4" width="12" height="8" fill="#dfe8f2" stroke="#5e7088" /><rect x="7" y="16" width="20" height="7" fill="#dfe8f2" stroke="#5e7088" /><path d="M22 8H12M18 28H7" stroke="#222" strokeWidth="2" /></svg>
                        <Caret color="#444" w={9} h={6} />
                    </div>
                    <div className="h-[44.5px] flex items-center gap-[4px]">
                        <svg width="30" height="32" viewBox="0 0 30 32"><rect x="3" y="3" width="16" height="16" fill="none" stroke="#5e7088" strokeWidth="1.5" /><rect x="11" y="12" width="16" height="16" fill="none" stroke="#5e7088" strokeWidth="1.5" />{[[1, 1], [23, 1], [1, 26], [23, 26]].map(([x, y]) => <rect key={x + '-' + y} x={x} y={y} width="5" height="5" fill="#36424f" />)}</svg>
                        <Caret color="#b9bec4" w={9} h={6} />
                    </div>
                    <div className="h-[44.5px] flex items-center gap-[4px]">
                        <svg width="30" height="30" viewBox="0 0 30 30"><path d="M15 8L27 28H1Z" fill="#7aa2d0" stroke="#34557f" /><path d="M15 8V28" stroke="#1d2a3a" strokeWidth="2" /><path d="M5 12C6 6 9 4 13 4M13 1V7L17 4Z" fill="#2d6fc0" stroke="#2d6fc0" /></svg>
                        <Caret color="#444" w={9} h={6} />
                    </div>
                </div>
            </div>
            <GroupLabel><span className="translate-x-[3px]">Yerleştir</span></GroupLabel>
        </div>
        {/* Size */}
        <div className="w-[87px] flex flex-col border-r border-[#eedcb8]">
            <div className="h-[136px] flex flex-col items-center pt-[6px] pl-[12px] pr-[4px]">
                <div className="w-[62px] h-[62px] rounded-[4px] border-2 border-[#e2e5e8] bg-white flex items-center justify-center">
                    <svg width="30" height="34" viewBox="0 0 30 34">
                        <rect x="17" y="2" width="10" height="30" fill="#dde8f4" stroke="#6d85a3" />
                        <rect x="4" y="13" width="9" height="9" fill="#dde8f4" stroke="#6d85a3" />
                        <path d="M8 2V11M8 24V32" stroke="#111" strokeWidth="2" />
                        <path d="M4 5L8 0L12 5ZM4 29L8 34L12 29Z" fill="#111" />
                    </svg>
                </div>
                <span className="text-[21px] leading-[26px] mt-[9px] text-[#3d4854]">Boyut</span>
                <div className="mt-[9px]"><Caret /></div>
            </div>
        </div>
    </div>
);

const Canvas = () => (
    <div className="flex-1 overflow-hidden pl-[149px] pt-[44px] bg-[linear-gradient(to_bottom,#d0dadb_0,#cdd2da_10%,#c4cbd2_50%,#b9c2c4_100%)]">
        <div className="relative w-[1590px] h-[1200px] bg-white shadow-[0_0_26px_rgba(70,75,80,0.55)]">
            <div className="absolute left-[180px] top-[177px] w-[1298px] h-[769px] bg-[#ebecee] border border-[#d6d9dc] rounded-[4px] p-[10px]">
                <div className="w-full h-full bg-white border-2 border-[#d5d8dc] rounded-[20px]" />
                <div className="absolute left-[641px] top-[2px] text-[10px] leading-[6px] text-[#8a8f95] tracking-[0.5px]">••••</div>
                <div className="absolute left-[641px] bottom-[2px] text-[10px] leading-[6px] text-[#8a8f95] tracking-[0.5px]">••••</div>
                <div className="absolute right-[2px] top-[375px] w-[5px] text-[8px] leading-[6px] text-[#8a8f95]">•<br />•<br />•<br />•</div>
                <svg width="12" height="12" viewBox="0 0 12 12" className="absolute right-0 top-0"><path d="M3 2h2v2H3zM8 2h2v2H8zM8 7h2v2H8z" fill="#9aa0a6" /></svg>
                <svg width="12" height="12" viewBox="0 0 12 12" className="absolute right-0 bottom-0"><path d="M8 3h2v2H8zM3 8h2v2H3zM8 8h2v2H8z" fill="#9aa0a6" /></svg>
            </div>
            <svg width="590" height="520" viewBox="0 0 590 520" className="absolute left-[249px] top-[264px]">
                <path d="M2 129H325V3L582 257L325 514V384H2Z" fill="#4a81bd" stroke="#2f5b8f" strokeWidth="3.5" />
            </svg>
        </div>
    </div>
);

const ScrollColumn = () => (
    <div className="w-[37px] shrink-0 flex flex-col bg-[#dfe2ee] border-r border-[#9aa3ad]">
        <div className="h-[49px] flex flex-col items-center pt-[8px] bg-[#e6e9ee]">
            <div className="w-[18px] h-[2px] bg-[#7c8590]" />
            <svg width="24" height="24" viewBox="0 0 24 24" className="mt-[6px]">
                <path d="M1 6H22V21H1Z" fill="#fff" stroke="#666" strokeWidth="1.3" />
                <path d="M6 1L11 5L6 9L2 5ZM17 10L22 14L17 18L12 14ZM7 14L11 18L7 22L3 18Z" fill="#fff" stroke="#555" strokeWidth="1.2" />
            </svg>
        </div>
        <div className="h-[34px] flex items-center justify-center">
            <svg width="19" height="10" viewBox="0 0 19 10"><path d="M9.5 0L19 10H0Z" fill="#3d434a" /></svg>
        </div>
        <div className="mx-[2px] h-[414px] rounded-[3px] border-2 border-[#939ba5] bg-gradient-to-r from-[#dde3f0] via-white to-[#e3e8f2] flex flex-col items-center justify-center gap-[2px]">
            <div className="w-[14px] h-px bg-[#8f98a3]" />
            <div className="w-[14px] h-px bg-[#8f98a3]" />
            <div className="w-[14px] h-px bg-[#8f98a3]" />
            <div className="w-[14px] h-px bg-[#8f98a3]" />
        </div>
        <div className="flex-1" />
        <div className="h-[34px] flex items-center justify-center border-b border-[#c2c6d0]">
            <svg width="19" height="10" viewBox="0 0 19 10"><path d="M9.5 10L19 0H0Z" fill="#3d434a" /></svg>
        </div>
        <div className="h-[103px] flex flex-col items-center justify-between py-[8px]">
            <svg width="12" height="14" viewBox="0 0 12 14"><path d="M6 0L12 6H0ZM6 7L12 13H0Z" fill="#3d434a" /></svg>
            <div className="w-[14px] h-[14px] rounded-full border-2 border-[#5f6771]" />
            <svg width="12" height="14" viewBox="0 0 12 14"><path d="M6 7L12 1H0ZM6 14L12 8H0Z" fill="#3d434a" /></svg>
        </div>
    </div>
);

const StatusBar = () => (
    <div className="h-[46px] shrink-0 flex items-stretch border-t-2 border-[#b2bac1] bg-gradient-to-b from-[#e8ecee] via-[#dbe0e3] to-[#c6cdd1] text-[21px] text-[#56606b]">
        <div className="w-[151px] pl-[22px] pb-[4px] flex items-center border-r-2 border-[#bfc5ca] whitespace-nowrap">Sayfa: 1 / 1</div>
        <div className="w-[134px] pl-[18px] pb-[4px] flex items-center border-r-2 border-[#bfc5ca] whitespace-nowrap">Sözcük: 0</div>
        <div className="w-[168px] pl-[17px] pb-[4px] flex items-center border-r-2 border-[#bfc5ca]">
            <svg width="34" height="32" viewBox="0 0 34 32">
                <path d="M1 23L14 14L33 20L18 31Z" fill="#7aa6dc" stroke="#39639e" />
                <path d="M6 15L13 22L29 1" fill="none" stroke="#3d6fb4" strokeWidth="5" />
            </svg>
            <span className="ml-[33px]">Türkçe</span>
        </div>
        <div className="w-[70px] pl-[20px] pb-[4px] flex items-center border-r-2 border-[#bfc5ca]">
            <svg width="30" height="28" viewBox="0 0 30 28">
                <rect x="1" y="5" width="28" height="22" fill="#fff" stroke="#5e7fa8" />
                <rect x="1" y="5" width="28" height="5" fill="#5a8bc4" />
                <path d="M1 15H29M1 21H29M12 10V27M20 10V27" stroke="#8aa6c6" />
                <circle cx="7" cy="5" r="4.5" fill="#d9582e" />
            </svg>
        </div>
        <div className="w-[802px]" />
        <div className="flex-1 flex items-center border-l-2 border-[#bfc5ca] pl-[7px] pb-[4px]">
            <div className="w-[38px] h-[36px] rounded-[4px] border border-[#e0a63c] bg-gradient-to-b from-[#fde39a] to-[#fbc95e] flex items-center justify-center">
                <svg width="24" height="24" viewBox="0 0 24 24"><rect x="1" y="1" width="22" height="22" fill="#fff" stroke="#3f3f3f" strokeWidth="1.6" /><path d="M5 6H19M5 10H19M5 14H19M5 18H19" stroke="#555" strokeWidth="1.6" /></svg>
            </div>
            <svg width="24" height="26" viewBox="0 0 24 26" className="ml-[7px]"><path d="M12 4C8 1 4 1 1 3V21C4 19 8 19 12 22C16 19 20 19 23 21V3C20 1 16 1 12 4ZM12 4V22" fill="#fff" stroke="#4e565f" strokeWidth="1.5" /><path d="M4 7H9M4 11H9M4 15H9M15 7H20M15 11H20M15 15H20" stroke="#79818a" strokeWidth="1.3" /></svg>
            <svg width="26" height="26" viewBox="0 0 26 26" className="ml-[10px]"><rect x="1" y="1" width="18" height="20" fill="#fff" stroke="#4e565f" strokeWidth="1.5" /><path d="M4 6H16M4 10H16M4 14H10" stroke="#79818a" strokeWidth="1.3" /><circle cx="18" cy="19" r="7" fill="#2f88ad" /></svg>
            <svg width="22" height="22" viewBox="0 0 22 22" className="ml-[12px]"><path d="M0 2H3M6 2H20M0 8H3M6 8H20M4 14H7M10 14H20M4 20H7M10 20H20" stroke="#6b7279" strokeWidth="2.2" /></svg>
            <svg width="21" height="22" viewBox="0 0 21 22" className="ml-[15px]"><path d="M0 2H21M0 7H21M0 11H21M0 15H21M0 20H21" stroke="#5f666d" strokeWidth="2" /></svg>
            <span className="ml-[28px] w-[54px] text-[#4a545f] text-[21px]">%100</span>
            <div className="ml-[17px] w-[30px] h-[30px] rounded-full border-2 border-[#aab1b9] bg-white flex items-center justify-center shrink-0"><div className="w-[14px] h-[3px] bg-[#555]" /></div>
            <div className="relative w-[203px] h-[2px] bg-[#9fa8b1]">
                <svg width="18" height="30" viewBox="0 0 18 30" className="absolute left-[94px] -top-[14px]"><path d="M1 1H17V21L9 29L1 21Z" fill="#f6f7f9" stroke="#77808a" strokeWidth="1.5" /></svg>
            </div>
            <div className="w-[30px] h-[30px] rounded-full border-2 border-[#aab1b9] bg-white flex items-center justify-center shrink-0 text-[26px] font-bold leading-none text-[#444]">+</div>
            <svg width="16" height="16" viewBox="0 0 16 16" className="ml-[18px] mt-[24px]"><path d="M12 1h3v3h-3zM7 6h3v3H7zM12 6h3v3h-3zM2 11h3v3H2zM7 11h3v3H7zM12 11h3v3h-3z" fill="#fff" stroke="#b3bac1" strokeWidth="0.5" /></svg>
        </div>
    </div>
);

export default function App() {
    return (
        <div className="relative w-[1920px] h-[1440px] overflow-hidden bg-[#f5f6f7] blur-[0.5px] font-['Open_Sans','Noto_Sans',sans-serif]">
            <svg width="0" height="0" className="absolute">
                <defs>
                    <linearGradient id="shapeFill" x1="0" y1="0" x2="0.3" y2="1">
                        <stop offset="0" stopColor="#ffffff" />
                        <stop offset="0.75" stopColor="#d0dff1" />
                        <stop offset="1" stopColor="#e6eef8" />
                    </linearGradient>
                </defs>
            </svg>
            <div className="w-[1917px] h-[1437px] border-2 border-[#616d78] rounded-t-[8px] flex flex-col overflow-hidden bg-[linear-gradient(to_bottom,#ecefef_0,#e9ecec_28px,#dcebea_36px,#dcebea_50px,#dde0f0_52px,#dde0f0_110px)]">
                <TitleBar />
                <TabRow />
                <Ribbon />
                <div className="flex-1 flex min-h-0">
                    <Canvas />
                    <ScrollColumn />
                </div>
                <StatusBar />
            </div>
            <ShapesMenu />
            <Cursor />
        </div>
    );
}
